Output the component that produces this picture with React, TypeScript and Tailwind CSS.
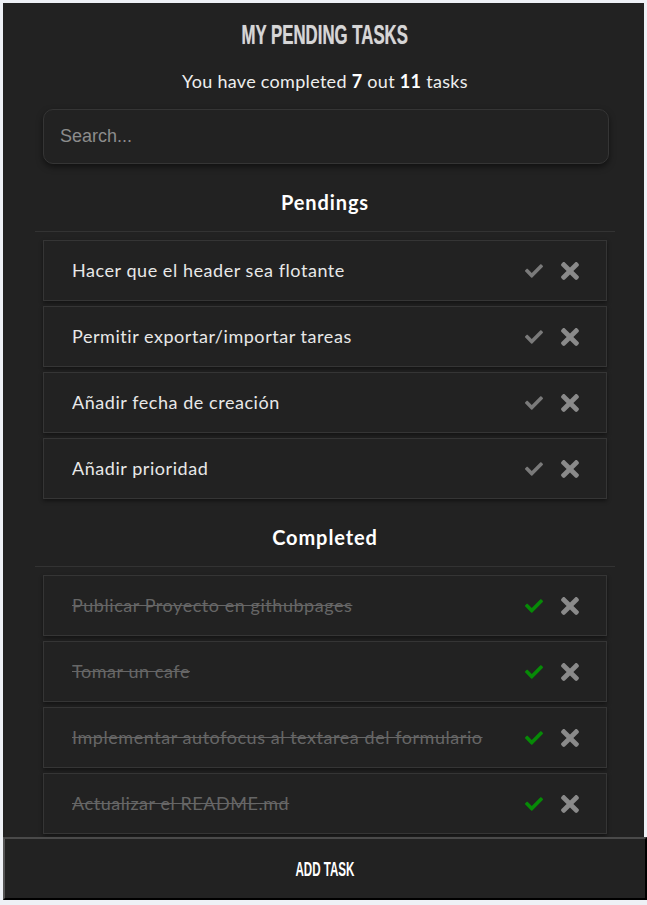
import React from 'react';
import { FaCheck, FaTimes } from 'react-icons/fa';

type Task = { text: string; done: boolean };

const pending: Task[] = [
  { text: 'Hacer que el header sea flotante', done: false },
  { text: 'Permitir exportar/importar tareas', done: false },
  { text: 'Añadir fecha de creación', done: false },
  { text: 'Añadir prioridad', done: false },
];

const completed: Task[] = [
  { text: 'Publicar Proyecto en githubpages', done: true },
  { text: 'Tomar un cafe', done: true },
  { text: 'Implementar autofocus al textarea del formulario', done: true },
  { text: 'Actualizar el README.md', done: true },
];

const TaskItem = ({ task }: { task: Task }) => (
  <li className="flex h-[61px] items-center border border-[#353535] bg-[#222222] pl-[28px] pr-[23px] shadow-[0_2px_4px_rgba(0,0,0,0.45)]">
    <span
      className={
        task.done
          ? 'flex-1 truncate text-[18px] tracking-[0.55px] text-[#666666] line-through decoration-[#666666]'
          : 'flex-1 truncate text-[18px] tracking-[0.55px] text-[#e8e8e8]'
      }
    >
      {task.text}
    </span>
    <div className="flex items-center gap-[14px]">
      <FaCheck size={18} className={task.done ? 'text-[#078a07]' : 'text-[#7a7a7a]'} />
      <FaTimes size={26} className="text-[#8a8a8a]" />
    </div>
  </li>
);

const Section = ({ title, tasks }: { title: string; tasks: Task[] }) => (
  <section className="mt-[23px]">
    <h2 className="h-[30px] text-center text-[20px] font-bold leading-[30px] tracking-[0.9px] text-white">{title}</h2>
    <hr className="mt-[14px] border-t border-[#333333]" />
    <ul className="mx-[8px] mt-[8px] flex flex-col gap-[5px]">
      {tasks.map((t) => (
        <TaskItem key={t.text} task={t} />
      ))}
    </ul>
  </section>
);

export default function App() {
  return (
    <div className="h-[905px] overflow-hidden bg-[#eef1f6] pb-[5px] pl-[3px] pr-[3px] pt-[3px] font-['Lato',sans-serif]">
      <div className="flex h-full flex-col bg-[#222222]">
        <div className="flex-1 overflow-hidden pl-[32px] pr-[29px] pt-[12px]">
          <h1 className="h-[40px] text-center leading-[40px]">
            <span className="inline-block scale-x-[0.6] font-['Liberation_Sans',sans-serif] text-[28px] font-bold text-[#d6d6d6] [text-shadow:0_0_1px_#888]">
              MY PENDING TASKS
            </span>
          </h1>
          <p className="mt-[12px] h-[28px] text-center text-[18px] leading-[28px] tracking-[0.3px] text-[#eeeeee]">
            You have completed <b className="font-bold text-white">7</b> out <b className="font-bold text-white">11</b> tasks
          </p>
          <div className="mt-[14px] pl-[8px] pr-[6px]">
            <input
              placeholder="Search..."
              className="h-[55px] w-full rounded-[10px] border border-[#353535] bg-[#222222] pl-[16px] font-['Liberation_Sans',sans-serif] text-[18px] text-white shadow-[0_3px_6px_rgba(0,0,0,0.5)] outline-none placeholder:text-[#8c8c8c]"
            />
          </div>
          <Section title="Pendings" tasks={pending} />
          <Section title="Completed" tasks={completed} />
        </div>
        <button className="-mr-[3px] h-[63px] shrink-0 border-2 border-b-black border-l-[#555555] border-r-black border-t-[#4a4a4a] bg-[#222222] text-center">
          <span className="inline-block scale-x-[0.58] font-['Liberation_Sans',sans-serif] text-[20px] font-bold text-white">
            ADD TASK
          </span>
        </button>
      </div>
    </div>
  );
}
